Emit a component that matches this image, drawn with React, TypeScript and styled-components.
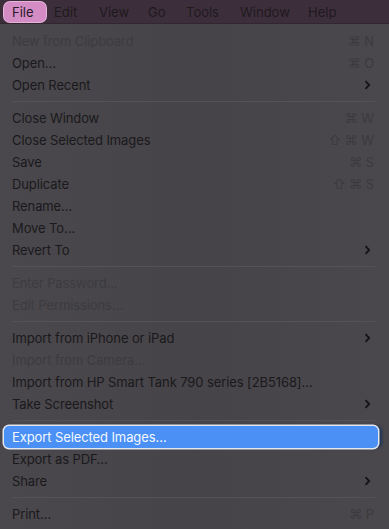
import React from "react";
import styled, { createGlobalStyle } from "styled-components";

const Global = createGlobalStyle`
  html, body { margin: 0; padding: 0; background: #48464a; }
  body { font-family: Inter, "Noto Sans", "Liberation Sans", sans-serif; }
`;

const Page = styled.div`
  width: 389px;
  height: 529px;
  overflow: hidden;
  display: flex;
  flex-direction: column;
  background: linear-gradient(90deg, #4a484c 0%, #464448 50%, #4a484c 100%);
`;

const MenuBar = styled.div`
  height: 24px;
  flex: none;
  display: flex;
  align-items: center;
  background: #3d2e3b;
  border-bottom: 1px solid #33272f;
  box-sizing: border-box;
  padding-left: 4px;
`;

const BarItem = styled.div<{ $active?: boolean; $w: number }>`
  width: ${(p) => p.$w}px;
  height: 20px;
  box-sizing: border-box;
  display: flex;
  align-items: center;
  padding-left: 8px;
  font-size: 13px;
  color: #1e1a1e;
  border-radius: 6px;
  ${(p) =>
    p.$active
      ? `background: #d48cc4; box-shadow: 0 0 0 1px #e6b2da; color: #2a1a28;`
      : ``}
`;

const Menu = styled.div`
  display: flex;
  flex-direction: column;
  padding-top: 6px;
`;

const Row = styled.div<{ $selected?: boolean; $disabled?: boolean }>`
  height: 22px;
  flex: none;
  display: flex;
  align-items: center;
  margin: 0 4px;
  padding: 0 11px 0 8px;
  font-size: 13px;
  letter-spacing: -0.1px;
  color: ${(p) => (p.$disabled ? "#3c3b3f" : "#1a191c")};
  border-radius: 5px;
  ${(p) =>
    p.$selected
      ? `background: #4a90f5; color: #f4f8ff; margin-right: 11px; padding-right: 8px;
         box-shadow: 0 0 0 1.5px #e4e8ee, 4px 0 3px #1f3556;`
      : ``}
`;

const Label = styled.span`
  flex: 1;
  white-space: nowrap;
`;

const Shortcut = styled.span`
  color: #3b3a3e;
  font-size: 13px;
  white-space: pre;
`;

const Sep = styled.div`
  height: 11px;
  flex: none;
  display: flex;
  align-items: center;
  padding: 0 14px 0 12px;
  &::after {
    content: "";
    flex: 1;
    height: 1px;
    background: #545257;
  }
`;

const Chevron = () => (
  <svg width="7" height="10" viewBox="0 0 7 10" style={{ marginRight: 3 }}>
    <path d="M1.5 1.2 L5.2 5 L1.5 8.8" fill="none" stroke="#141316" strokeWidth="1.8" />
  </svg>
);

type Item =
  | { sep: true }
  | { label: string; sc?: string; sub?: boolean; dis?: boolean; sel?: boolean };

const items: Item[] = [
  { label: "New from Clipboard", sc: "⌘ N", dis: true },
  { label: "Open…", sc: "⌘ O" },
  { label: "Open Recent", sub: true },
  { sep: true },
  { label: "Close Window", sc: "⌘ W" },
  { label: "Close Selected Images", sc: "⇧ ⌘ W" },
  { label: "Save", sc: "⌘ S" },
  { label: "Duplicate", sc: "⇧ ⌘ S" },
  { label: "Rename…" },
  { label: "Move To…" },
  { label: "Revert To", sub: true },
  { sep: true },
  { label: "Enter Password…", dis: true },
  { label: "Edit Permissions…", dis: true },
  { sep: true },
  { label: "Import from iPhone or iPad", sub: true },
  { label: "Import from Camera…", dis: true },
  { label: "Import from HP Smart Tank 790 series [2B5168]…" },
  { label: "Take Screenshot", sub: true },
  { sep: true },
  { label: "Export Selected Images…", sel: true },
  { label: "Export as PDF…" },
  { label: "Share", sub: true },
  { sep: true },
  { label: "Print…", sc: "⌘ P" },
];

const bar = [
  { t: "File", w: 42, a: true },
  { t: "Edit", w: 45 },
  { t: "View", w: 49 },
  { t: "Go", w: 38 },
  { t: "Tools", w: 54 },
  { t: "Window", w: 68 },
  { t: "Help", w: 48 },
];

export default function App() {
  return (
    <Page>
      <Global />
      <MenuBar>
        {bar.map((b) => (
          <BarItem key={b.t} $w={b.w} $active={b.a}>
            {b.t}
          </BarItem>
        ))}
      </MenuBar>
      <Menu>
        {items.map((it, i) =>
          "sep" in it ? (
            <Sep key={i} />
          ) : (
            <Row key={i} $disabled={it.dis} $selected={it.sel}>
              <Label>{it.label}</Label>
              {it.sc && <Shortcut>{it.sc}</Shortcut>}
              {it.sub && <Chevron />}
            </Row>
          )
        )}
      </Menu>
    </Page>
  );
}
